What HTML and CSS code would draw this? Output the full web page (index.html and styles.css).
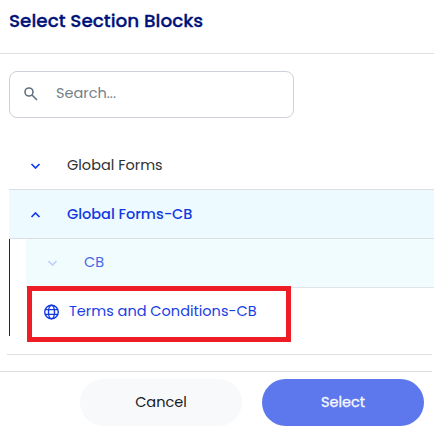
FILE: index.html
```html
<!DOCTYPE html>
<html lang="en">
<head>
<meta charset="utf-8">
<title>Select Section Blocks</title>
<link rel="stylesheet" href="styles.css">
</head>
<body>
<div class="dialog">
  <header class="header"><h1 class="title">Select Section Blocks</h1></header>
  <main class="content">
    <div class="search">
      <svg class="search-icon" viewBox="0 0 14 14"><circle cx="5" cy="5" r="4" /><path d="M8 8l5 5" /></svg>
      <span class="placeholder">Search...</span>
    </div>
    <div class="tree">
      <div class="row">
        <svg class="chevron" viewBox="0 0 10 6"><path d="M1 1l4 4 4-4" /></svg>
        <span class="label">Global Forms</span>
      </div>
      <div class="row open">
        <svg class="chevron" viewBox="0 0 10 6"><path d="M1 5l4-4 4 4" /></svg>
        <span class="label">Global Forms-CB</span>
      </div>
      <div class="children">
        <div class="row child">
          <svg class="chevron" viewBox="0 0 10 6"><path d="M1 1l4 4 4-4" /></svg>
          <span class="label">CB</span>
        </div>
        <div class="row leaf">
          <svg class="globe" viewBox="0 0 16 16"><circle cx="8" cy="8" r="6.8" /><ellipse cx="8" cy="8" rx="3" ry="6.8" /><path d="M1.6 5.6h12.8M1.6 10.4h12.8" /></svg>
          <span class="label">Terms and Conditions-CB</span>
        </div>
        <div class="highlight"></div>
      </div>
    </div>
  </main>
  <footer class="footer">
    <button class="button cancel">Cancel</button>
    <button class="button select">Select</button>
  </footer>
</div>
</body>
</html>
```

FILE: styles.css
```css
* { box-sizing: border-box; }
body { margin: 0; background: #fff; font-family: Poppins, Inter, sans-serif; font-size: 14.5px; }
.dialog { width: 434px; height: 429px; overflow: hidden; }
.header { height: 54px; padding: 7px 9px 0; border-bottom: 1px solid #dee0e3; }
.title { margin: 0; color: #00127a; font-size: 18.4px; line-height: 27px; font-weight: 500; -webkit-text-stroke: 0.3px #00127a; white-space: nowrap; }
.content { height: 301px; padding: 17px 0 0 9px; }
.search { display: flex; align-items: center; width: 285px; height: 47px; padding: 0 0 2px 14px; border: 1px solid #cdd1da; border-radius: 8px; }
.search-icon { width: 14px; height: 14px; margin-top: 1px; fill: none; stroke: #62717f; stroke-width: 1.6; }
.placeholder { margin: -1px 0 0 18px; color: #747f87; }
.tree { margin-top: 24px; }
.row { display: flex; align-items: center; height: 49px; padding: 0 0 1px 21px; border-bottom: 1px solid #dadfe3; white-space: nowrap; }
.tree > .row:first-child { height: 48px; }
.chevron { width: 11px; height: 6px; margin-top: 2px; fill: none; stroke: #1238ee; stroke-width: 1.7; }
.child .chevron { margin-top: 0; }
.label { margin: 0 0 0 26px; color: #2e3135; }
.tree > .row:first-child .label { margin-top: 1px; }
.open .label { margin-top: 1px; color: #1238e2; font-weight: 500; }
.open { background: #edfaff; }
.children { position: relative; height: 97px; padding-left: 16px; border-left: 1px solid #001fc0; }
.child { background: #f1fcff; border-color: #e0e5e8; }
.child .chevron { stroke: #becffb; }
.child .label { margin-top: -1px; color: #4869e2; }
.leaf { height: 48px; padding-left: 17px; border: 0; }
.globe { width: 17px; height: 16px; margin-top: 1px; fill: none; stroke: #1238e2; stroke-width: 1.4; }
.leaf .label { margin: -1px 0 0 9px; color: #1a3ee5; }
.highlight { position: absolute; left: 17px; top: 47px; width: 264px; height: 56px; border: 5px solid #ee1c25; }
.footer { height: 74px; padding: 24px 10px 0 80px; display: flex; gap: 20px; position: relative; }
.footer::before { content: ""; position: absolute; left: 7px; right: 2px; top: -1px; border-top: 1px solid #dfe0e5; }
.footer::after { content: ""; position: absolute; left: 0; right: 2px; top: 16px; border-top: 1px solid #dedfe4; }
.button { width: 162px; height: 47px; padding: 0; border: 0; border-radius: 24px; font: inherit; }
.cancel { background: #f8f9fb; color: #17191c; }
.select { background: #5d78ec; color: #f7f8ff; -webkit-text-stroke: 0.3px #f7f8ff; }
```
